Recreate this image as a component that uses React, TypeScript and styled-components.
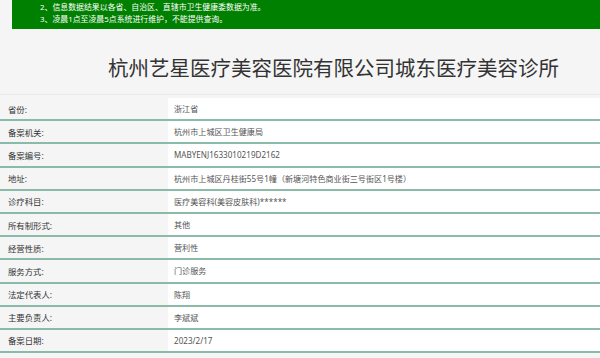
import { FC } from 'react'
import styled, { createGlobalStyle } from 'styled-components'

type Record = {
  label: string
  value: string
}

const notices = [
  '2、信息数据结果以各省、自治区、直辖市卫生健康委数据为准。',
  '3、凌晨1点至凌晨5点系统进行维护，不能提供查询。',
]

const records: Record[] = [
  { label: '省份:', value: '浙江省' },
  { label: '备案机关:', value: '杭州市上城区卫生健康局' },
  { label: '备案编号:', value: 'MABYENJ1633010219D2162' },
  { label: '地址:', value: '杭州市上城区丹桂街55号1幢（新塘河特色商业街三号街区1号楼）' },
  { label: '诊疗科目:', value: '医疗美容科(美容皮肤科)******' },
  { label: '所有制形式:', value: '其他' },
  { label: '经营性质:', value: '营利性' },
  { label: '服务方式:', value: '门诊服务' },
  { label: '法定代表人:', value: '陈翔' },
  { label: '主要负责人:', value: '李斌斌' },
  { label: '备案日期:', value: '2023/2/17' },
]

const App: FC = () => {
  return (
    <>
      <GlobalStyle />
      <Page>
        <Banner>
          {notices.map((text) => (
            <Notice key={text}>{text}</Notice>
          ))}
        </Banner>
        <TitleBar>
          <Title>杭州艺星医疗美容医院有限公司城东医疗美容诊所</Title>
        </TitleBar>
        <Table>
          {records.map(({ label, value }) => (
            <Row key={label}>
              <Label>{label}</Label>
              <Value>{value}</Value>
            </Row>
          ))}
        </Table>
      </Page>
    </>
  )
}

export default App

const GlobalStyle = createGlobalStyle`
  html, body {
    margin: 0;
    padding: 0;
    background: #f5f5f5;
  }
  body {
    font-family: "Noto Sans", "Noto Sans CJK SC", sans-serif;
    color: #333;
  }
`

const Page = styled('div')`
  width: 600px;
  height: 358px;
  overflow: hidden;
`

const Banner = styled('div')`
  margin-left: 12px;
  height: 29px;
  box-sizing: border-box;
  padding: 1px 0 0 28px;
  background: #008000;
`

const Notice = styled('div')`
  color: #fff;
  font-size: 7.9px;
  line-height: 12px;
  white-space: nowrap;
`

const TitleBar = styled('div')`
  height: 66px;
  box-sizing: border-box;
  padding: 26px 0 0 108px;
  border-bottom: 1px solid #e8e8e8;
`

const Title = styled('h1')`
  margin: 0;
  font-size: 20.5px;
  line-height: 26px;
  font-weight: 400;
  color: #333;
  white-space: nowrap;
`

const Table = styled('div')`
  margin-top: 3px;
`

const Row = styled('div')`
  display: grid;
  grid-template-columns: 168px 1fr;
  height: 23.2px;
  box-sizing: border-box;
  border-bottom: 2px solid #8cbaa8;
`

const Label = styled('div')`
  display: flex;
  align-items: center;
  padding-left: 8px;
  font-size: 8.4px;
  color: #333;
  white-space: nowrap;
`

const Value = styled('div')`
  display: flex;
  align-items: center;
  padding-left: 6px;
  background: #fff;
  font-size: 8.1px;
  color: #555;
  white-space: nowrap;
`
